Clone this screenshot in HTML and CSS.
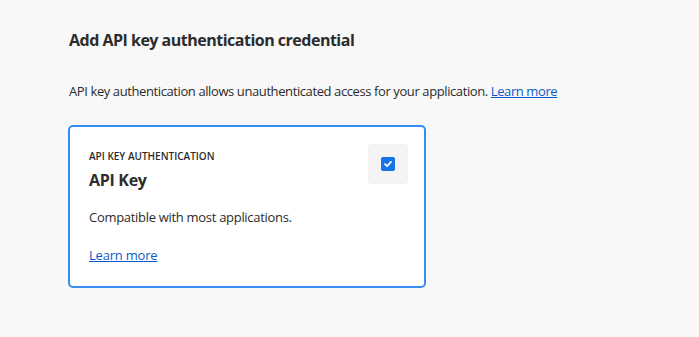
FILE: index.html
```html
<!DOCTYPE html>
<html lang="en">
<head>
  <meta charset="UTF-8">
  <title>Add API key authentication credential</title>
  <link rel="stylesheet" href="styles.css">
</head>
<body>
  <div class="page">
    <h1>Add API key authentication credential</h1>
    <p class="intro">API key authentication allows unauthenticated access for your application. <a href="#">Learn more</a></p>

    <div class="card selected">
      <div class="card-head">
        <div>
          <div class="eyebrow">API KEY AUTHENTICATION</div>
          <h2>API Key</h2>
        </div>
        <div class="check-wrap">
          <span class="check">
            <svg width="10" height="10" viewBox="0 0 10 10"><path d="M2 5.2 L4.1 7.2 L8 2.8" fill="none" stroke="#fff" stroke-width="1.8" stroke-linecap="round" stroke-linejoin="round"/></svg>
          </span>
        </div>
      </div>
      <p class="desc">Compatible with most applications.</p>
      <a class="more" href="#">Learn more</a>
    </div>
  </div>
</body>
</html>
```

FILE: styles.css
```css
html, body { margin: 0; padding: 0; background: #f8f8f8; }
body { font-family: "Open Sans", "Noto Sans", sans-serif; color: #2c2c2c; }
.page { padding: 29px 69px; }
h1 { font-size: 16px; font-weight: 700; margin: 0 0 31px; letter-spacing: -0.5px; }
.intro { font-size: 13px; margin: 0 0 25px; letter-spacing: -0.4px; }
a { color: #0b5ac9; }
.card { width: 358px; box-sizing: border-box; background: #fff; border: 2px solid #378ef0; border-radius: 5px; padding: 16px 16px 21px 19px; margin-left: -1px; }
.card-head { display: flex; justify-content: space-between; align-items: flex-start; }
.eyebrow { font-size: 10px; font-weight: 600; margin-top: 6px; }
h2 { font-size: 16px; font-weight: 700; margin: 6px 0 0; letter-spacing: -0.3px; }
.check-wrap { width: 40px; height: 40px; margin-top: 1px; background: #f3f3f3; border-radius: 4px; display: flex; align-items: center; justify-content: center; }
.check { width: 14px; height: 14px; background: #1473e6; border-radius: 2px; display: flex; align-items: center; justify-content: center; }
.desc { font-size: 13px; margin: 17px 0 17px; letter-spacing: -0.3px; }
.more { font-size: 13px; letter-spacing: -0.2px; }
```
